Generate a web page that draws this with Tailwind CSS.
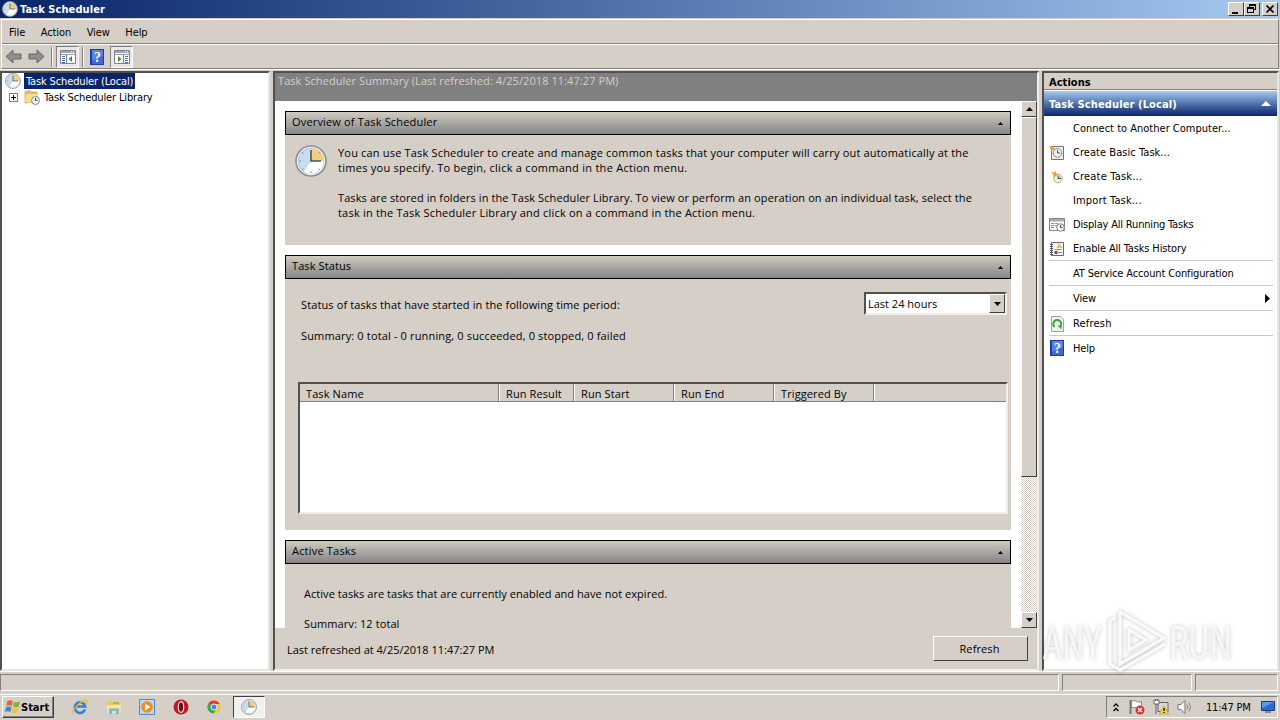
<!DOCTYPE html>
<html lang="en">
<head>
    <meta charset="UTF-8">
    <meta name="viewport" content="width=device-width, initial-scale=1.0">
    <title>Task Scheduler</title>
    <script src="https://cdn.jsdelivr.net/npm/@tailwindcss/browser@4"></script>
</head>
<body class="relative w-[1280px] h-[720px] overflow-hidden flex flex-col bg-[#d5cfc8] text-black text-[11px] leading-4 whitespace-nowrap font-['DejaVu_Sans_Condensed','DejaVu_Sans',sans-serif] [font-stretch:condensed] tracking-[-0.14px]">

    <!-- Shared icons -->
    <svg class="hidden">
        <symbol id="clock" viewBox="0 0 32 32">
            <circle cx="16" cy="16" r="15" fill="#f4f6f8" stroke="#8b8f94" stroke-width="1.600"/>
            <circle cx="16" cy="16" r="12.800" fill="#c6ddf0" stroke="#b8c4d0" stroke-width="1"/>
            <path d="M16 16V3.500A12.500 12.500 0 0 1 28.500 16Z" fill="#f3cf7c"/>
            <path d="M16 16H28.500A12.500 12.500 0 0 1 9 26.500Z" fill="#fff"/>
            <path d="M16 5V16H26" fill="none" stroke="#4a5668" stroke-width="1.600"/>
            <path d="M16 26v2M4 16h2M7 7l1.500 1.500M7 25l1.500-1.500M25 25l-1.500-1.500M25 7l-1.500 1.500" stroke="#7d93aa" stroke-width="1"/>
        </symbol>
        <symbol id="help" viewBox="0 0 14 16">
            <path d="M0 0h14v16H0z" fill="#1e3c9c"/>
            <path d="M2 1h11v14H2z" fill="#3f68d0"/>
            <path d="M2 1h11v6L2 12z" fill="#5a82e0"/>
            <text x="7.500" y="13" font-size="14" font-weight="bold" fill="#fff" text-anchor="middle" font-family="Liberation Serif">?</text>
        </symbol>
        <symbol id="pane" viewBox="0 0 16 14">
            <path d="M.5.5h15v13H.5z" fill="#fff" stroke="#7d8290"/>
            <path d="M1 1h14v2H1z" fill="#9aa5bb"/>
            <path d="M11 1.500h1M13 1.500h1" stroke="#fff"/>
            <path d="M1 4.500h14" stroke="#9a9a9a"/>
        </symbol>
    </svg>

    <!-- Title bar -->
    <header class="h-[18px] shrink-0 flex items-center pl-0.5 pr-0.5 bg-linear-to-r from-[#0a246a] to-[#a6caf0]">
        <svg class="w-4 h-4"><use href="#clock"/></svg>
        <h1 class="ml-0.5 pt-px flex-1 font-bold text-white tracking-[0.08px]">Task Scheduler</h1>
        <div class="flex">
            <button class="w-4 h-[14px] bg-[#d5cfc8] border border-t-white border-l-white border-r-[#404040] border-b-[#404040]">
                <svg class="w-[14px] h-3" viewBox="0 0 14 12"><path d="M3 9h6v2H3z"/></svg>
            </button>
            <button class="w-4 h-[14px] bg-[#d5cfc8] border border-t-white border-l-white border-r-[#404040] border-b-[#404040]">
                <svg class="w-[14px] h-3" viewBox="0 0 14 12" shape-rendering="crispEdges"><path d="M4 1h7v2H4zM4 3h1v2H4zM10 3h1v4h-1zM8 6h2v1H8zM2 4h7v2H2zM2 6h1v4H2zM8 6h1v4H8zM2 9h7v1H2z"/></svg>
            </button>
            <button class="ml-0.5 w-4 h-[14px] bg-[#d5cfc8] border border-t-white border-l-white border-r-[#404040] border-b-[#404040]">
                <svg class="w-[14px] h-3" viewBox="0 0 14 12"><path d="M3.500 2.500l7 7M10.500 2.500l-7 7" stroke="#000" stroke-width="1.700"/></svg>
            </button>
        </div>
    </header>

    <!-- Menu and toolbar -->
    <div class="mt-px ml-px mr-px h-[50px] shrink-0 border border-t-white border-l-white border-r-[#808080] border-b-[#808080]">
        <nav class="h-6 flex items-center gap-[15.500px] pl-[7px] pt-0.5 border-b border-[#808080] tracking-[-0.08px]">
            <span>File</span><span>Action</span><span>View</span><span>Help</span>
        </nav>
        <div class="h-6 flex items-center border-t border-white pl-[3px]">
            <svg class="w-[17px] h-[15px]" viewBox="0 0 17 15"><path d="M1 7.500L8 1v4h8v5H8v4z" fill="#8f8f8f" stroke="#666"/></svg>
            <svg class="ml-[6px] w-[17px] h-[15px]" viewBox="0 0 17 15"><path d="M16 7.500L9 1v4H1v5h8v4z" fill="#8f8f8f" stroke="#666"/></svg>
            <div class="ml-[6px] w-0.5 h-5 border-l border-l-[#808080] border-r border-r-white"></div>
            <div class="ml-[3px] w-[23px] h-[22px] flex items-center justify-center bg-[#ebe8e3] border border-t-[#808080] border-l-[#808080] border-r-white border-b-white">
                <svg class="w-4 h-[14px]" viewBox="0 0 16 14"><use href="#pane"/><path d="M6.500 5v8.500" stroke="#7d8290"/><path d="M2 6.500h3M2 8.500h3M2 10.500h3M2 12.500h3" stroke="#4d6ea8"/><path d="M12 6v6L8.500 9z" fill="#3c9a2c"/></svg>
            </div>
            <div class="ml-[3px] w-0.5 h-5 border-l border-l-[#808080] border-r border-r-white"></div>
            <svg class="ml-[6px] w-[14px] h-4"><use href="#help"/></svg>
            <div class="ml-[6px] w-[23px] h-[22px] flex items-center justify-center bg-[#ebe8e3] border border-t-[#808080] border-l-[#808080] border-r-white border-b-white">
                <svg class="w-4 h-[14px]" viewBox="0 0 16 14"><use href="#pane"/><path d="M9.500 5v8.500" stroke="#7d8290"/><path d="M11 6.500h3M11 8.500h3M11 10.500h3M11 12.500h3" stroke="#4d6ea8"/><path d="M4 6v6l3.500-3z" fill="#3c9a2c"/></svg>
            </div>
        </div>
    </div>

    <!-- Panes -->
    <main class="h-[602px] shrink-0 flex border-t border-white">
        <!-- Tree -->
        <aside class="mt-px w-[270px] border-2 border-t-[#505050] border-l-[#505050] border-r-[#e8e5e0] border-b-[#e8e5e0] bg-white">
            <div class="h-4 flex items-center pl-[3px]">
                <svg class="w-4 h-4"><use href="#clock"/></svg>
                <span class="ml-[3px] h-4 w-[111px] pl-0.5 pt-px bg-[#0a246a] text-white">Task Scheduler (Local)</span>
            </div>
            <div class="h-4 flex items-center pl-[7px]">
                <svg class="w-[9px] h-[9px]" viewBox="0 0 9 9" shape-rendering="crispEdges"><path d="M.5.5h8v8h-8z" fill="#fff" stroke="#808080"/><path d="M2 4.500h5M4.500 2v5" stroke="#000"/></svg>
                <svg class="ml-[6px] w-4 h-4" viewBox="0 0 16 16"><path d="M1 2.500l5-1 1 1.500h6v10l-12 1z" fill="#e6bf50" stroke="#c79a33" stroke-width=".6"/><path d="M2 5h11v8.500H1z" fill="#f8de88"/><circle cx="11.500" cy="11.500" r="4" fill="#eef2f5" stroke="#808890"/><path d="M11.500 9v2.500h2" fill="none" stroke="#445"/></svg>
                <span class="ml-1 pt-0.5">Task Scheduler Library</span>
            </div>
        </aside>

        <!-- Summary -->
        <section class="mt-px ml-[3px] w-[766px] flex flex-col border-2 border-t-[#505050] border-l-[#505050] border-r-[#f0eee9] border-b-[#f0eee9] font-['Open_Sans','Noto_Sans',sans-serif] [font-stretch:normal] tracking-[0.1px]">
            <div class="h-7 shrink-0 bg-[#808080] text-[#d5cfc8] pl-[3px] tracking-[0.07px]">Task Scheduler Summary (Last refreshed: 4/25/2018 11:47:27 PM)</div>
            <div class="h-[527px] shrink-0 flex bg-white">
                <div class="flex-1 pl-[10px] pr-[10px] pt-[10px] overflow-hidden">
                    <div class="h-[134px] bg-[#d5cfc8]">
                        <h2 class="h-6 flex items-center justify-between border border-black pl-1.5 pr-[7px] pb-0.5 bg-linear-to-b from-[#d0ccc2] to-[#858585] tracking-[0.17px]">Overview of Task Scheduler
                            <svg class="mt-[3px] w-[5px] h-[3px]" viewBox="0 0 5 3"><path d="M0 3L2.500 0 5 3z"/></svg>
                        </h2>
                        <div class="flex pl-[10px] pt-[10px]">
                            <svg class="w-8 h-8 shrink-0"><use href="#clock"/></svg>
                            <div class="ml-[11px] leading-[15px]">
                                <p class="tracking-[0.18px]">You can use Task Scheduler to create and manage common tasks that your computer will carry out automatically at the<br><span class="tracking-[0.27px]">times you specify. To begin, click a command in the Action menu.</span></p>
                                <p class="mt-[15px]">Tasks are stored in folders in the Task Scheduler Library. To view or perform an operation on an individual task, select the<br><span class="tracking-[0.2px]">task in the Task Scheduler Library and click on a command in the Action menu.</span></p>
                            </div>
                        </div>
                    </div>
                    <div class="mt-[10px] h-[275px] bg-[#d5cfc8]">
                        <h2 class="h-6 flex items-center justify-between border border-black pl-1.5 pr-[7px] pb-0.5 bg-linear-to-b from-[#d0ccc2] to-[#858585]">Task Status
                            <svg class="mt-[3px] w-[5px] h-[3px]" viewBox="0 0 5 3"><path d="M0 3L2.500 0 5 3z"/></svg>
                        </h2>
                        <div class="pl-4 pr-1 pt-[13px] flex justify-between">
                            <span class="mt-[5px] tracking-[0.12px]">Status of tasks that have started in the following time period:</span>
                            <div class="w-[143px] h-[23px] flex border-2 border-t-[#505050] border-l-[#505050] border-r-[#f0eee9] border-b-[#f0eee9] bg-white">
                                <span class="flex-1 pl-0.5 pt-0.5 tracking-[0px]">Last 24 hours</span>
                                <button class="w-4 flex items-center justify-center bg-[#d5cfc8] border border-t-white border-l-white border-r-[#404040] border-b-[#404040]">
                                    <svg class="w-[7px] h-1" viewBox="0 0 7 4"><path d="M0 0h7L3.500 4z"/></svg>
                                </button>
                            </div>
                        </div>
                        <p class="pl-4 mt-[13px] tracking-[0.15px]">Summary: 0 total - 0 running, 0 succeeded, 0 stopped, 0 failed</p>
                        <div class="mt-[38px] ml-[13px] mr-[3px] h-[132px] border-2 border-t-[#505050] border-l-[#505050] border-r-[#f0eee9] border-b-[#f0eee9] bg-white">
                            <div class="h-[18px] flex bg-[#d5cfc8] border-b border-[#808080] leading-[19px]">
                                <span class="w-[199px] pl-1.5 border-r border-[#808080]">Task Name</span>
                                <span class="w-[75px] pl-1.5 border-l border-l-white border-r border-r-[#808080]">Run Result</span>
                                <span class="w-[100px] pl-1.5 border-l border-l-white border-r border-r-[#808080]">Run Start</span>
                                <span class="w-[100px] pl-1.5 border-l border-l-white border-r border-r-[#808080]">Run End</span>
                                <span class="w-[100px] pl-1.5 border-l border-l-white border-r border-r-[#808080]">Triggered By</span>
                                <span class="flex-1 border-l border-white"></span>
                            </div>
                        </div>
                    </div>
                    <div class="mt-[10px] h-[100px] bg-[#d5cfc8]">
                        <h2 class="h-6 flex items-center justify-between border border-black pl-1.5 pr-[7px] pb-0.5 bg-linear-to-b from-[#d0ccc2] to-[#858585] tracking-[0.2px]">Active Tasks
                            <svg class="mt-[3px] w-[5px] h-[3px]" viewBox="0 0 5 3"><path d="M0 3L2.500 0 5 3z"/></svg>
                        </h2>
                        <p class="pl-[19px] mt-[22px] tracking-[0.05px]">Active tasks are tasks that are currently enabled and have not expired.</p>
                        <div class="pl-[19px] mt-[14px] h-3 overflow-hidden">Summary: 12 total</div>
                    </div>
                </div>
                <!-- Scrollbar -->
                <div class="w-4 flex flex-col bg-[repeating-conic-gradient(#ffffff_0_25%,#d5cfc8_0_50%)] bg-[length:2px_2px]">
                    <button class="h-4 flex items-center justify-center bg-[#d5cfc8] border border-t-white border-l-white border-r-[#404040] border-b-[#404040]">
                        <svg class="w-[7px] h-1" viewBox="0 0 7 4"><path d="M0 4h7L3.500 0z"/></svg>
                    </button>
                    <div class="h-[360px] bg-[#d5cfc8] border border-t-white border-l-white border-r-[#404040] border-b-[#404040]"></div>
                    <button class="mt-auto h-4 flex items-center justify-center bg-[#d5cfc8] border border-t-white border-l-white border-r-[#404040] border-b-[#404040]">
                        <svg class="w-[7px] h-1" viewBox="0 0 7 4"><path d="M0 0h7L3.500 4z"/></svg>
                    </button>
                </div>
            </div>
            <div class="flex-1 flex justify-between pl-3 pr-[9px] pt-2">
                <span class="mt-[6px] tracking-[0px]">Last refreshed at 4/25/2018 11:47:27 PM</span>
                <button class="w-[95px] h-[25px] pr-0.5 border border-t-white border-l-white border-r-[#404040] border-b-[#404040]">Refresh</button>
            </div>
        </section>

        <!-- Actions -->
        <aside class="mt-px ml-[3px] w-[237px] border-2 border-t-[#505050] border-l-[#505050] border-r-[#e8e5e0] border-b-[#e8e5e0] bg-white">
            <div class="h-[17px] bg-[#d5cfc8] border-b border-[#808080] pl-[5px] pt-0.5 leading-[15px] font-bold tracking-[0.05px]">Actions</div>
            <div class="mt-px h-[25px] flex items-center justify-between pl-[5px] pr-[6px] pt-0.5 bg-linear-to-b from-[#a6caf0] to-[#0a246a] text-white font-bold tracking-[0.12px]">Task Scheduler (Local)
                <svg class="mb-0.5 w-[10px] h-[5px]" viewBox="0 0 10 5"><path d="M0 5h10L5 0z" fill="#fff"/></svg>
            </div>
            <ul class="pl-[5px] pr-1">
                <li class="h-6 pt-px flex items-center pl-6 tracking-[0.01px]">Connect to Another Computer...</li>
                <li class="h-6 pt-px flex items-center gap-2 tracking-[0.05px]">
                    <svg class="w-4 h-4" viewBox="0 0 16 16"><path d="M2.500 1.500h12v13h-12z" fill="#f5f1ec" stroke="#8a6a62"/><circle cx="8.500" cy="8" r="4.300" fill="#eef3f6" stroke="#7d868c"/><path d="M8.500 5.500V8H11" fill="none" stroke="#445"/><path d="M0 1l3 1 2-1.500L5 3l2 2-3-.5L2 7l-.2-3z" fill="#f0982c"/></svg>
                    Create Basic Task...
                </li>
                <li class="h-6 pt-px flex items-center gap-2 tracking-[0.18px]">
                    <svg class="w-4 h-4" viewBox="0 0 16 16"><circle cx="9" cy="9.500" r="4.300" fill="#eef3f6" stroke="#a8a8a0"/><path d="M9 9.500V5.500A4 4 0 0 1 13 9.500z" fill="#f3cf7c"/><path d="M9 6.500v3h3" fill="none" stroke="#445"/><path d="M2 3l3 .5L7 2l.3 2.500L10 6 7 6.500 5 9l-.5-3z" fill="#f0a020"/></svg>
                    Create Task...
                </li>
                <li class="h-6 pt-px flex items-center pl-6 tracking-[0.15px]">Import Task...</li>
                <li class="h-6 pt-px flex items-center gap-2 tracking-[-0.18px]">
                    <svg class="w-4 h-4" viewBox="0 0 16 16"><path d="M.5 1.500h15v12H.5z" fill="#fff" stroke="#858585"/><path d="M1 2h14v2.500H1z" fill="#a8abb2"/><path d="M2 6.500h3M6 6.500h3M2 8.500h3M6 8.500h2M2 10.500h3" stroke="#888"/><circle cx="11.500" cy="10.500" r="3.800" fill="#f3f5f6" stroke="#7d8085"/><path d="M11.500 8v2.500h2" fill="none" stroke="#445"/></svg>
                    Display All Running Tasks
                </li>
                <li class="h-6 pt-px flex items-center gap-2">
                    <svg class="w-4 h-4" viewBox="0 0 16 16"><path d="M2.500 1.500h12v13h-12z" fill="#f2f4fa" stroke="#5a6a8a"/><path d="M1 3.500h3M1 5.500h3M1 7.500h3M1 9.500h3M1 11.500h3M1 13.500h3" stroke="#555"/><path d="M10 2l3.500 5h-6z" fill="#eec82c"/><path d="M5.500 8.500h7M9 11.500h4" stroke="#7a8fc0"/><path d="M5.500 10h3v3h-3z" fill="#a83c3c"/></svg>
                    Enable All Tasks History
                </li>
                <li class="h-[25px] pt-px flex items-center pl-6 border-t border-[#c8c8c8]">AT Service Account Configuration</li>
                <li class="h-[25px] pt-px flex items-center justify-between pl-6 pr-[3px] border-t border-[#c8c8c8]">View
                    <svg class="w-[5px] h-[9px]" viewBox="0 0 5 9"><path d="M0 0l5 4.500L0 9z"/></svg>
                </li>
                <li class="h-[25px] pt-px flex items-center gap-2 border-t border-[#c8c8c8] tracking-[0.2px]">
                    <svg class="w-4 h-4" viewBox="0 0 16 16"><path d="M2.500.5h9l3 3v12h-12z" fill="#eef4ee" stroke="#9aa89a"/><path d="M5.500 11A4 4 0 1 1 11 11" fill="none" stroke="#3fa23f" stroke-width="2"/><path d="M8.500 9.500h4v4z" fill="#3fa23f"/></svg>
                    Refresh
                </li>
                <li class="h-[25px] flex items-center gap-[9px] pl-px border-t border-[#c8c8c8]">
                    <svg class="w-[14px] h-4"><use href="#help"/></svg>
                    <span class="pt-px">Help</span>
                </li>
            </ul>
        </aside>
    </main>

    <!-- Status bar -->
    <div class="h-[23px] shrink-0 flex gap-[3px] pt-0.5 pb-[3px] pr-0.5 border-t border-white">
        <div class="w-[1059px] border border-t-[#808080] border-l-[#808080] border-r-white border-b-white"></div>
        <div class="w-[130px] border border-t-[#808080] border-l-[#808080] border-r-white border-b-white"></div>
        <div class="flex-1 border border-t-[#808080] border-l-[#808080] border-r-white border-b-white"></div>
    </div>

    <!-- Taskbar -->
    <footer class="flex-1 flex items-start border-t border-white pl-0.5 pr-[2px] pt-px">
        <button class="w-[52px] h-[22px] flex items-center pl-0.5 border border-t-white border-l-white border-r-[#404040] border-b-[#404040] shadow-[inset_-1px_-1px_#808080] font-bold tracking-[0px]">
            <svg class="w-4 h-4" viewBox="0 0 16 16"><path d="M2.500 2Q5 .5 7.800 2.200L6.800 7Q4 5.500 1.300 7z" fill="#e8622c"/><path d="M9 2.700Q12 4 15 2.500L13.800 7.500Q11 8.800 8 7.500z" fill="#7cb83c"/><path d="M1 8.200Q4 6.800 6.500 8.200L5.300 13Q3 11.500 0 13z" fill="#3f84d8"/><path d="M7.700 8.800Q10.500 10 13.500 8.700L12.200 13.500Q9.500 15 6.500 13.500z" fill="#f4c430"/></svg>
            <span class="pt-px">Start</span>
        </button>
        <div class="ml-[18px] mt-[3px] flex gap-[17.500px]">
            <svg class="w-4 h-4" viewBox="0 0 16 16"><path d="M13 10.500A5.300 5.300 0 1 1 13.200 7.500H4.500" fill="none" stroke="#2c84d8" stroke-width="2.600"/><path d="M1 15C-1 12 9 1 14.500 1 16 1.500 15 4 14 5" fill="none" stroke="#e8b83c" stroke-width="1.300"/></svg>
            <svg class="w-4 h-4" viewBox="0 0 16 16"><path d="M1 3l1-1h4l1 1h7v11H1z" fill="#e8c860"/><path d="M1 6h14v8H1z" fill="#f8e4a0"/><path d="M3 15V9.500h10V15h-3v-3H6v3z" fill="#7cb8dc"/><path d="M7 4h6" stroke="#6fa860"/></svg>
            <svg class="w-4 h-4" viewBox="0 0 16 16"><path d="M.5.5h15v15H.5z" fill="#b8d8f4" stroke="#4a8cc8"/><circle cx="8" cy="8" r="5.800" fill="#f08c1c"/><path d="M6 4.500v7L11.500 8z" fill="#fff"/></svg>
            <svg class="w-4 h-4" viewBox="0 0 16 16"><circle cx="8" cy="8" r="7.500" fill="#c01820"/><ellipse cx="8" cy="8" rx="2.700" ry="5.300" fill="#701014" stroke="#f4dcdc" stroke-width="1.200"/></svg>
            <svg class="ml-px w-[14px] h-4" viewBox="0 0 16 16"><circle cx="8" cy="8" r="7.500" fill="#f4c82c"/><path d="M8 8L1.500 4.200A7.500 7.500 0 0 1 14.500 4.500H8z" fill="#dc3c30"/><path d="M8 8L1.500 4.200A7.500 7.500 0 0 0 7.500 15.500L10.500 10z" fill="#3ca450"/><circle cx="8" cy="8" r="3.500" fill="#4884e8" stroke="#fff"/></svg>
        </div>
        <div class="ml-[12px] w-8 h-[22px] flex items-center justify-center bg-[#f3f1ee] border border-t-[#404040] border-l-[#404040] border-r-white border-b-white">
            <svg class="w-4 h-4"><use href="#clock"/></svg>
        </div>
        <div class="ml-auto w-[172px] h-[22px] flex items-center pl-[6px] border border-t-[#808080] border-l-[#808080] border-r-white border-b-white">
            <svg class="w-[6px] h-[9px]" viewBox="0 0 6 9"><path d="M.5 3.500L3 1l2.500 2.500M.5 8L3 5.500 5.500 8" fill="none" stroke="#000" stroke-width="1.300"/></svg>
            <svg class="ml-[10px] w-4 h-4" viewBox="0 0 16 16"><path d="M1.500 1v14" stroke="#777" stroke-width="2"/><path d="M2.500 2q3-1 5 .5t5 0v7q-3 1-5-.5t-5 0z" fill="#fff" stroke="#888"/><circle cx="11" cy="11" r="4.500" fill="#dc3030"/><path d="M9 9l4 4M13 9l-4 4" stroke="#fff" stroke-width="1.500"/></svg>
            <svg class="ml-2 w-4 h-4" viewBox="0 0 16 16"><path d="M5 3.500h10v9H5z" fill="#d8d8d8" stroke="#666"/><path d="M1 1h5v4H1zM3 5v10" fill="#fff" stroke="#666"/><path d="M2.500 0v2M4.500 0v2" stroke="#666"/><path d="M11 6.500l4.700 8.500H6.300z" fill="#f4dc20" stroke="#b89a10" stroke-width=".6"/><path d="M11 9v3M11 13v1" stroke="#000" stroke-width="1.300"/></svg>
            <svg class="ml-2 w-4 h-4" viewBox="0 0 16 16"><path d="M1 5.500h3L8 1.500v13L4 10.500H1z" fill="#f4f4f4" stroke="#777"/><path d="M10 5.500q1.500 2.500 0 5M12 3.500q3 4.500 0 9" fill="none" stroke="#888"/></svg>
            <span class="ml-[13px] pt-px tracking-[-0.2px]">11:47 PM</span>
            <svg class="ml-[10px] w-[14px] h-3" viewBox="0 0 14 12"><path d="M.5.500h13v9H.5z" fill="#2c6cd0" stroke="#1c3c80"/><path d="M1 1h12L1 7z" fill="#5c9cec"/><path d="M4 11h6" stroke="#445"/></svg>
        </div>
    </footer>

    <!-- Watermark -->
    <svg class="absolute left-[1036px] top-[602px] w-[204px] h-[76px] drop-shadow-[0_0_2px_rgba(0,0,0,0.3)]" viewBox="0 0 204 76" fill="#fff" fill-opacity=".7" font-family="Roboto" font-size="46">
        <text x="6" y="56.500" textLength="60" lengthAdjust="spacingAndGlyphs">ANY</text>
        <text x="133" y="56.500" textLength="63" lengthAdjust="spacingAndGlyphs">RUN</text>
        <path d="M84 10L128 36 84 62zM93 28v20l17-10z" fill="none" stroke="#fff" stroke-opacity=".85" stroke-width="3"/>
        <path d="M79 16l-5 3v43l10 6L129 42" fill="none" stroke="#fff" stroke-opacity=".85" stroke-width="3"/>
    </svg>
</body>
</html>
